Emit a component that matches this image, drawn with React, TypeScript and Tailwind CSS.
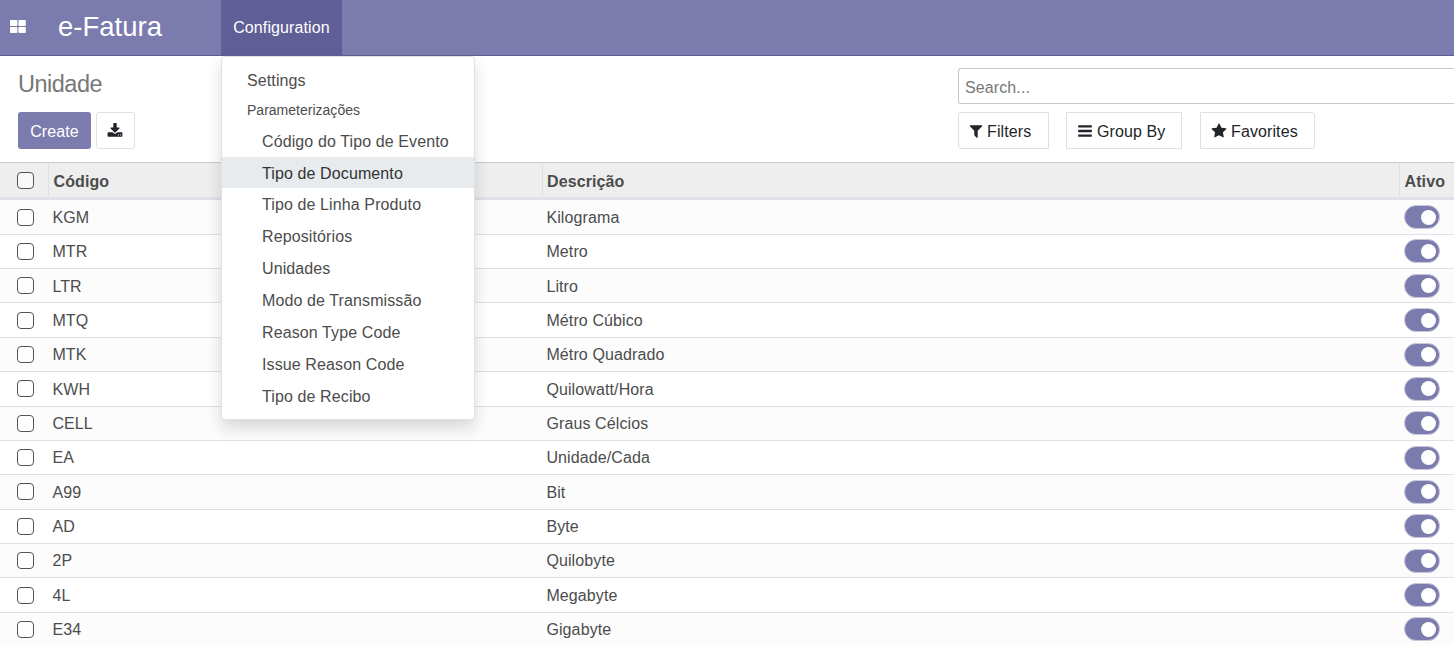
import React from "react";

const PATHS = {
  download: "M1344 1344q0-26-19-45t-45-19-45 19-19 45 19 45 45 19 45-19 19-45zm256 0q0-26-19-45t-45-19-45 19-19 45 19 45 45 19 45-19 19-45zm128-224v320q0 40-28 68t-68 28h-1472q-40 0-68-28t-28-68v-320q0-40 28-68t68-28h465l135 136q58 56 136 56t136-56l136-136h464q40 0 68 28t28 68zm-325-569q17 41-14 70l-448 448q-18 19-45 19t-45-19l-448-448q-31-29-14-70 17-39 59-39h256v-448q0-26 19-45t45-19h256q26 0 45 19t19 45v448h256q42 0 59 39z",
  filter: "M1595 295q17 41-14 70l-493 493v742q0 42-39 59-13 5-25 5-27 0-45-19l-256-256q-19-19-19-45v-486l-493-493q-31-29-14-70 17-39 59-39h1280q42 0 59 39z",
  bars: "M1664 1344v128q0 26-19 45t-45 19h-1408q-26 0-45-19t-19-45v-128q0-26 19-45t45-19h1408q26 0 45 19t19 45zm0-512v128q0 26-19 45t-45 19h-1408q-26 0-45-19t-19-45v-128q0-26 19-45t45-19h1408q26 0 45 19t19 45zm0-512v128q0 26-19 45t-45 19h-1408q-26 0-45-19t-19-45v-128q0-26 19-45t45-19h1408q26 0 45 19t19 45z",
  star: "M1728 647q0 22-26 48l-363 354 86 500q1 7 1 20 0 21-10.500 35.500t-30.500 14.500q-19 0-40-12l-449-236-449 236q-22 12-40 12-21 0-31.500-14.500t-10.500-35.500q0-6 2-20l86-500-364-354q-25-27-25-48 0-37 56-46l502-73 225-455q19-41 49-41t49 41l225 455 502 73q56 9 56 46z",
};

function Icon({ name, className }: { name: keyof typeof PATHS; className: string }) {
  return (
    <svg viewBox="0 0 1792 1792" fill="currentColor" className={className} aria-hidden="true">
      <path d={PATHS[name]} />
    </svg>
  );
}

function AppsIcon() {
  return (
    <svg viewBox="0 0 16 13" fill="currentColor" className="h-[13px] w-4" aria-hidden="true">
      <rect x="0" y="0" width="7.4" height="6" rx="0.9" />
      <rect x="8.4" y="0" width="7.4" height="6" rx="0.9" />
      <rect x="0" y="7" width="7.4" height="6" rx="0.9" />
      <rect x="8.4" y="7" width="7.4" height="6" rx="0.9" />
    </svg>
  );
}

const ROWS: [string, string][] = [
  ["KGM", "Kilograma"],
  ["MTR", "Metro"],
  ["LTR", "Litro"],
  ["MTQ", "Métro Cúbico"],
  ["MTK", "Métro Quadrado"],
  ["KWH", "Quilowatt/Hora"],
  ["CELL", "Graus Célcios"],
  ["EA", "Unidade/Cada"],
  ["A99", "Bit"],
  ["AD", "Byte"],
  ["2P", "Quilobyte"],
  ["4L", "Megabyte"],
  ["E34", "Gigabyte"],
];

const MENU = [
  "Código do Tipo de Evento",
  "Tipo de Documento",
  "Tipo de Linha Produto",
  "Repositórios",
  "Unidades",
  "Modo de Transmissão",
  "Reason Type Code",
  "Issue Reason Code",
  "Tipo de Recibo",
];

function Checkbox() {
  return <span className="ml-[17px] block size-[17px] shrink-0 rounded-[4px] border-[1.5px] border-[#50555b] bg-white/60" />;
}

function Toggle() {
  return (
    <span className="flex h-6 w-9 items-center justify-end rounded-full border border-[#c8c8dd] bg-[#7c7bad] pr-[3px]">
      <span className="size-[15px] rounded-full bg-white" />
    </span>
  );
}

function ConfigurationMenu() {
  return (
    <div className="absolute left-0 top-14 z-10 h-[364px] w-[254px] rounded-[4px] border border-[#dee2e6] bg-white pt-[7px] text-[#4c4c4c] shadow-[0_8px_16px_rgba(0,0,0,0.15)]">
      <div className="flex h-8 items-center pl-[25px] pt-[2px]">Settings</div>
      <div className="flex h-[29px] items-center pb-[2px] pl-[25px] text-sm tracking-[0.01px]">Parameterizações</div>
      {MENU.map((item) => (
        <div
          key={item}
          className={
            item === "Tipo de Documento"
              ? "flex h-[31px] items-center bg-[#e7ebee] pl-10 pt-[2px] text-[#333]"
              : "flex h-8 items-center pl-10 pt-[2px]"
          }
        >
          {item}
        </div>
      ))}
    </div>
  );
}

export default function App() {
  return (
    <div className="h-[646px] w-[1454px] overflow-hidden bg-white font-['Liberation_Sans',Arial,sans-serif] text-base leading-6 tracking-[0.11px] text-[#4c4c4c]">
      <header className="flex h-14 border-b border-[#5f5e97] bg-[#7c7bad] text-white">
        <div className="flex w-[58px] items-start pl-[10px] pt-5">
          <AppsIcon />
        </div>
        <div className="flex w-[163px] items-center pb-px text-[27.5px] tracking-normal">e-Fatura</div>
        <div className="relative flex w-[121px] items-center justify-center bg-[#5f5e97]">
          Configuration
          <ConfigurationMenu />
        </div>
      </header>

      <section className="flex h-[107px] border-b border-[#cacacc]">
        <div className="w-[958px] pl-[18px] pt-3">
          <h1 className="flex h-8 items-center text-[23.5px] tracking-[-0.5px] text-[#777]">Unidade</h1>
          <div className="mt-3 flex gap-[5px]">
            <button className="flex h-[37px] w-[73px] items-center justify-center rounded-[3px] bg-[#7c7bad] pt-[2px] text-white">Create</button>
            <button className="flex h-[37px] w-[39px] items-center justify-center rounded-[3px] border border-[#dee2e6] pr-px text-[#212529]">
              <Icon name="download" className="size-4" />
            </button>
          </div>
        </div>
        <div className="flex-1 pt-3 text-[#212529]">
          <div className="flex h-9 items-center rounded-l-[3px] border border-r-0 border-[#c8c8c8] pl-[6px] pt-[4px] text-[#777]">Search...</div>
          <div className="mt-2 flex">
            <button className="flex h-[37px] w-[91px] items-center rounded-l-[3px] border border-[#dee0e8] pl-[9px]">
              <Icon name="filter" className="mr-[3px] size-4" />
              <span className="pt-[2px]">Filters</span>
            </button>
            <button className="ml-[17px] flex h-[37px] w-[116px] items-center border border-[#dee0e8] pl-[10px]">
              <Icon name="bars" className="mr-1 size-4" />
              <span className="pt-[2px]">Group By</span>
            </button>
            <button className="ml-[18px] flex h-[37px] w-[115px] items-center rounded-r-[3px] border border-[#dee0e8] pl-[10px]">
              <Icon name="star" className="mr-1 size-4" />
              <span className="pt-[2px]">Favorites</span>
            </button>
          </div>
        </div>
      </section>

      <div className="flex h-[37.4px] border-b-[3px] border-[#dee2e6] bg-[#eee] font-bold tracking-[0.1px]">
        <div className="flex w-12 items-center"><Checkbox /></div>
        <div className="flex w-[494px] items-center border-l border-[#dee2e6] pl-[4.5px] pt-[3px]">Código</div>
        <div className="flex w-[857px] items-center border-l border-[#dee2e6] pl-1 pt-[3px]">Descrição</div>
        <div className="flex flex-1 items-center border-l border-[#dee2e6] pl-[4.5px] pt-[3px]">Ativo</div>
      </div>

      {ROWS.map(([code, description], i) => (
        <div
          key={code}
          className={
            i % 2 === 0
              ? "flex h-[34.36px] items-center border-b border-[#dee2e6] bg-[#fcfcfc]"
              : "flex h-[34.36px] items-center border-b border-[#dee2e6] bg-white"
          }
        >
          <div className="w-[52.4px]"><Checkbox /></div>
          <div className="w-[494px] pt-[1.5px]">{code}</div>
          <div className="w-[857.6px] pt-[1.5px]">{description}</div>
          <Toggle />
        </div>
      ))}
    </div>
  );
}
